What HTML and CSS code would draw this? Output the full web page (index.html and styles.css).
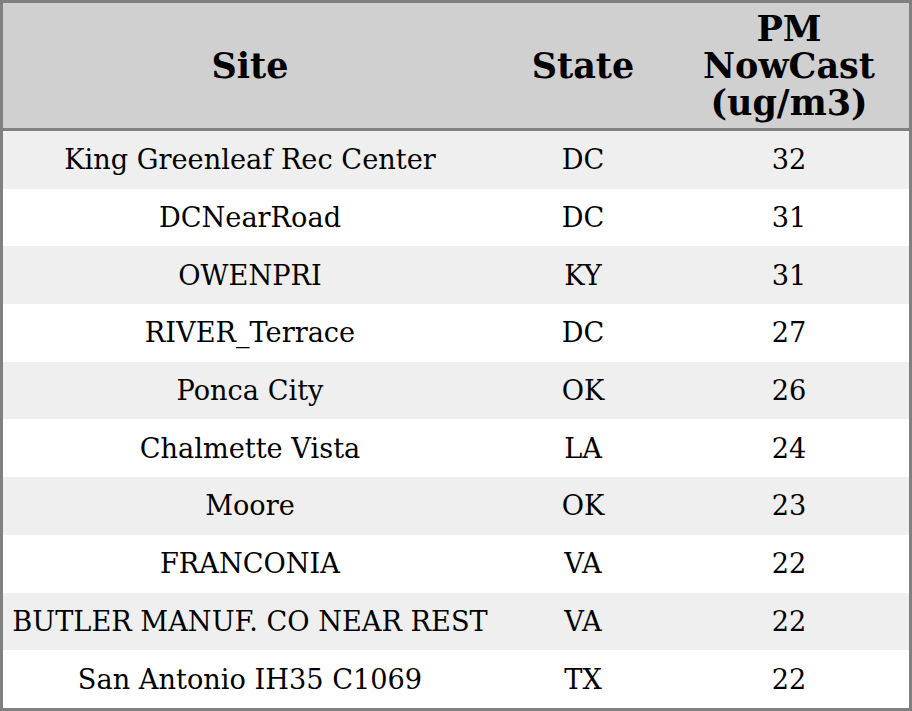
FILE: index.html
```html
<!DOCTYPE html>
<html>
<head>
<meta charset="utf-8">
<link rel="stylesheet" href="styles.css">
</head>
<body>
<table class="tbl">
  <colgroup>
    <col class="c-site">
    <col class="c-state">
    <col class="c-pm">
  </colgroup>
  <thead>
    <tr><th>Site</th><th>State</th><th>PM<br>NowCast<br>(ug/m3)</th></tr>
  </thead>
  <tbody>
    <tr><td>King Greenleaf Rec Center</td><td>DC</td><td>32</td></tr>
    <tr><td>DCNearRoad</td><td>DC</td><td>31</td></tr>
    <tr><td>OWENPRI</td><td>KY</td><td>31</td></tr>
    <tr><td>RIVER_Terrace</td><td>DC</td><td>27</td></tr>
    <tr><td>Ponca City</td><td>OK</td><td>26</td></tr>
    <tr><td>Chalmette Vista</td><td>LA</td><td>24</td></tr>
    <tr><td>Moore</td><td>OK</td><td>23</td></tr>
    <tr><td>FRANCONIA</td><td>VA</td><td>22</td></tr>
    <tr><td>BUTLER MANUF. CO NEAR REST</td><td>VA</td><td>22</td></tr>
    <tr><td>San Antonio IH35 C1069</td><td>TX</td><td>22</td></tr>
  </tbody>
</table>
</body>
</html>
```
FILE: styles.css
```css
html, body {
  margin: 0;
  padding: 0;
  background: #ffffff;
}
.tbl {
  box-sizing: border-box;
  width: 912px;
  height: 711px;
  border-collapse: separate;
  border-spacing: 0;
  border: 3px solid #808080;
  font-family: "DejaVu Serif", serif;
  color: #000;
  table-layout: fixed;
}
.c-site { width: 494px; }
.c-state { width: 172px; }
.c-pm { width: 240px; }
.tbl th {
  background: #d0d0d0;
  font-size: 35px;
  font-weight: bold;
  line-height: 37px;
  height: 125px;
  padding: 0;
  border-bottom: 3px solid #808080;
  text-align: center;
  vertical-align: middle;
}
.tbl td {
  font-size: 27.2px;
  text-align: center;
  vertical-align: middle;
  padding: 0;
  height: 57px;
}
.tbl tbody tr:nth-child(odd) td { background: #efefef; }
.tbl tbody tr:nth-child(even) td { background: #ffffff; }
```
